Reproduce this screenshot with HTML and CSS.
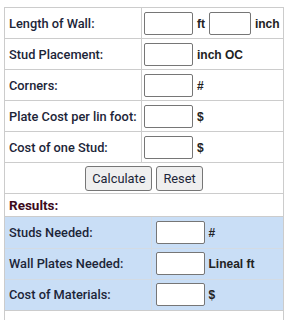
FILE: index.html
```
<!doctype html>
<html lang="en">
<head>
    <meta charset="UTF-8">
    <meta name="viewport" content="width=device-width, initial-scale=1.0">
    <title>Stud Calculator</title>
    <link rel="stylesheet" href="styles.css">
</head>
<body>
<table class="calc">
    <tr>
        <td class="label">Length of Wall:</td>
        <td class="value"><input type="text" class="num"> <span class="unit">ft</span> <input type="text" class="num small"> <span class="unit">inch</span></td>
    </tr>
    <tr>
        <td class="label">Stud Placement:</td>
        <td class="value"><input type="text" class="num"> <span class="unit">inch OC</span></td>
    </tr>
    <tr>
        <td class="label">Corners:</td>
        <td class="value"><input type="text" class="num"> <span class="unit">#</span></td>
    </tr>
    <tr>
        <td class="label">Plate Cost per lin foot:</td>
        <td class="value"><input type="text" class="num"> <span class="unit">$</span></td>
    </tr>
    <tr>
        <td class="label">Cost of one Stud:</td>
        <td class="value"><input type="text" class="num"> <span class="unit">$</span></td>
    </tr>
    <tr>
        <td colspan="2" class="buttons">
            <button type="button">Calculate</button>
            <button type="reset">Reset</button>
        </td>
    </tr>
    <tr>
        <td colspan="2" class="results-title">Results:</td>
    </tr>
    <tr>
        <td colspan="2" class="results-cell">
            <table class="results">
                <tr>
                    <td class="label">Studs Needed:</td>
                    <td class="value"><input type="text" class="num"> <span class="unit">#</span></td>
                </tr>
                <tr>
                    <td class="label">Wall Plates Needed:</td>
                    <td class="value"><input type="text" class="num"> <span class="unit">Lineal ft</span></td>
                </tr>
                <tr>
                    <td class="label">Cost of Materials:</td>
                    <td class="value"><input type="text" class="num"> <span class="unit">$</span></td>
                </tr>
            </table>
        </td>
    </tr>
    <tr>
        <td colspan="2" class="spacer"></td>
    </tr>
</table>
</body>
</html>
```

FILE: styles.css
```
body {
    margin: 0;
    padding: 7px 0 0 4px;
    background-color: #fff;
    font-family: Roboto, "Liberation Sans", sans-serif;
}

.calc {
    width: 280px;
    border-collapse: collapse;
    border: 1px solid #ccc;
}

.calc td {
    border: 1px solid #ccc;
    height: 31px;
    box-sizing: border-box;
}

.label {
    width: 137px;
    padding: 0 4px;
    font-size: 12.8px;
    font-weight: 500;
    color: #1c2538;
    white-space: nowrap;
}

.value {
    padding: 0 2px;
    white-space: nowrap;
}

.num {
    width: 49px;
    height: 23px;
    box-sizing: border-box;
    border: 1px solid #767676;
    border-radius: 2px;
    padding: 0 2px;
    vertical-align: middle;
    margin: 0;
}

.num.small {
    width: 42px;
}

.unit {
    font-family: "Liberation Sans", Arial, sans-serif;
    font-size: 12px;
    font-weight: bold;
    color: #222;
    vertical-align: middle;
}

.buttons {
    text-align: center;
    padding: 0;
}

.buttons button {
    font-family: Roboto, "Liberation Sans", sans-serif;
    font-size: 12.8px;
    color: #1c2538;
    height: 25px;
    padding: 0 6px;
    background-color: #efefef;
    border: 1px solid #767676;
    border-radius: 3px;
}

.calc .results-title {
    height: 23px;
    padding: 0 4px;
    font-size: 13.5px;
    font-weight: bold;
    color: #3d0c1c;
}

.calc .results-cell {
    padding: 0;
    height: auto;
}

.results {
    width: 100%;
    border-collapse: collapse;
    background-color: #c9def6;
}

.calc .results td {
    border: 1px solid #d3dbe4;
    border-left: none;
    border-right: none;
}

.calc .results tr:first-child td {
    border-top: none;
}

.calc .results tr:last-child td {
    border-bottom: none;
}

.calc .results .label {
    width: 146px;
    border-right: 1px solid #d3dbe4;
}

.calc .results .value {
    padding: 0 4px;
}

.calc .spacer {
    height: 20px;
}
```
